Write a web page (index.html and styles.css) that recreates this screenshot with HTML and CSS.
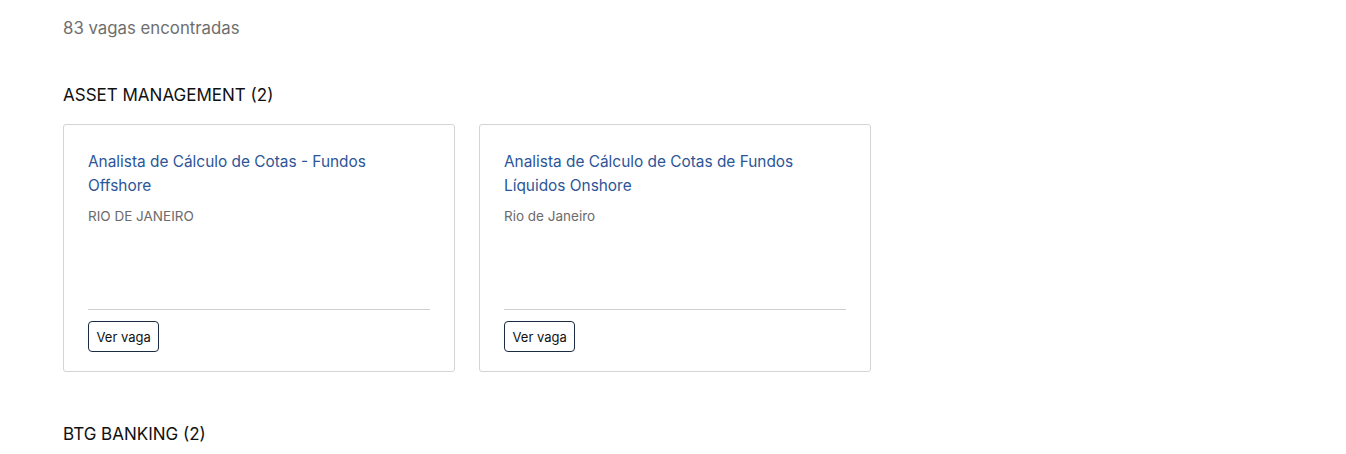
FILE: index.html
```html
<!DOCTYPE html>
<html lang="pt-BR">
<head>
<meta charset="utf-8">
<title>Vagas</title>
<link rel="stylesheet" href="styles.css">
</head>
<body>
<main class="page">
  <p class="count">83 vagas encontradas</p>
  <section class="group">
    <h2 class="group-title">ASSET MANAGEMENT (2)</h2>
    <div class="cards">
      <article class="card">
        <a class="job-title" href="#">Analista de Cálculo de Cotas - Fundos Offshore</a>
        <p class="location">RIO DE JANEIRO</p>
        <div class="card-footer">
          <button class="btn">Ver vaga</button>
        </div>
      </article>
      <article class="card">
        <a class="job-title" href="#">Analista de Cálculo de Cotas de Fundos Líquidos Onshore</a>
        <p class="location">Rio de Janeiro</p>
        <div class="card-footer">
          <button class="btn">Ver vaga</button>
        </div>
      </article>
    </div>
  </section>
  <section class="group">
    <h2 class="group-title">BTG BANKING (2)</h2>
  </section>
</main>
</body>
</html>
```
FILE: styles.css
```css
* { box-sizing: border-box; }
html, body { margin: 0; padding: 0; background: #fff; }
body {
  font-family: "Inter", "Liberation Sans", sans-serif;
  color: #1b1b1b;
}
.page {
  padding: 16px 63px 0;
}
.count {
  margin: 0;
  font-size: 16.8px;
  line-height: 24px;
  color: #6e6e6e;
}
.group {
  margin-top: 43px;
}
.group + .group {
  margin-top: 50px;
}
.group-title {
  margin: 0 0 17px;
  font-size: 17px;
  line-height: 24px;
  font-weight: 400;
  color: #111;
}
.cards {
  display: flex;
  gap: 24px;
}
.card {
  width: 392px;
  height: 248px;
  border: 1px solid #d4d4d4;
  border-radius: 3px;
  padding: 25px 24px 19px;
  display: flex;
  flex-direction: column;
}
.job-title {
  display: block;
  font-size: 15.4px;
  line-height: 24px;
  color: #2b5597;
  text-decoration: none;
  padding-right: 40px;
}
.location {
  margin: 8px 0 0;
  font-size: 13.5px;
  line-height: 20px;
  color: #6b6b6b;
}
.card-footer {
  margin-top: auto;
  border-top: 1px solid #cfcfcf;
  padding-top: 11px;
}
.btn {
  font-family: inherit;
  font-size: 13px;
  line-height: 17px;
  color: #111;
  background: #fff;
  border: 1px solid #1c2b44;
  border-radius: 4px;
  padding: 7px 7.5px 5px;
  height: 31px;
  white-space: nowrap;
}
```
